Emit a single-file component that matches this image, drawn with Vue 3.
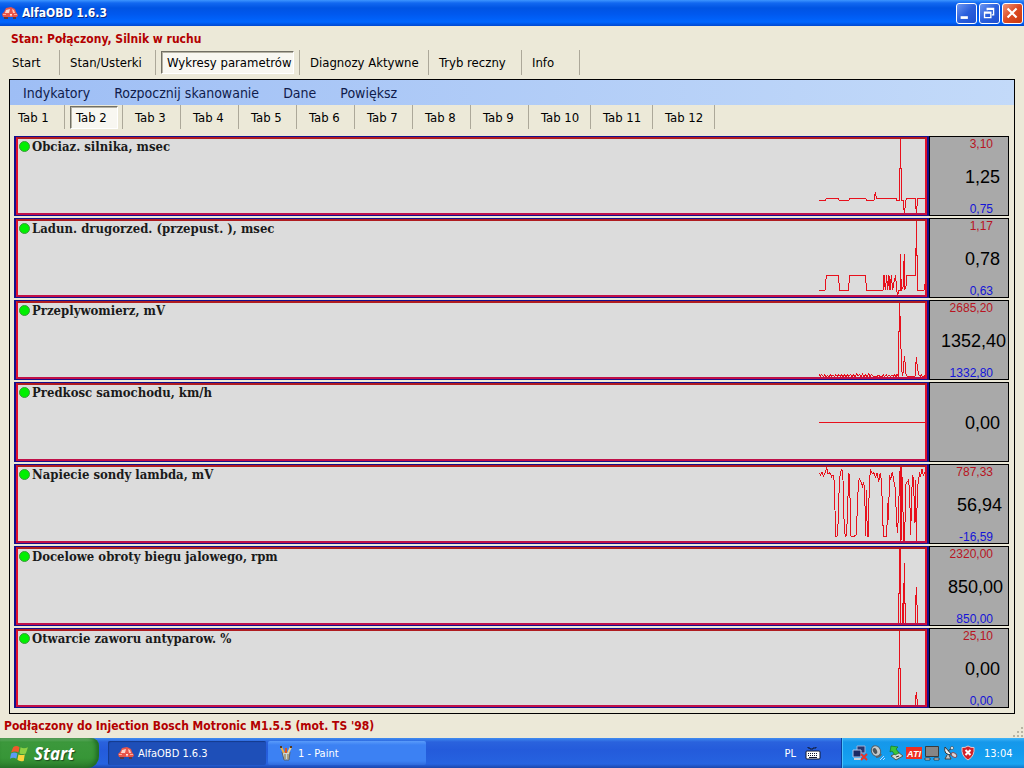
<script setup>
import { ref } from 'vue'

const sections = [
  { name: 'Start', size: 'w51' },
  { name: 'Stan/Usterki', size: 'w96' },
  { name: 'Wykresy parametrów', size: 'w134' },
  { name: 'Diagnozy Aktywne', size: 'w129' },
  { name: 'Tryb reczny', size: 'w92' },
  { name: 'Info', size: 'w58' },
]
const activeSection = ref('Wykresy parametrów')
const menu = ['Indykatory', 'Rozpocznij skanowanie', 'Dane', 'Powiększ']
const activeTab = ref(2)

const charts = [
  {
    name: 'Obciaz. silnika, msec', max: '3,10', value: '1,25', min: '0,75', top: 27,
    points: '57,211 76,211 79,205 115,205 118,211 147,211 150,205 197,205 200,211 222,211 226,187 229,205 290,205 291,211 298,211 298,115 301,115 301,25 302,115 304,115 304,210 310,212 310,222 313,250 316,225 319,205 346,205 349,250 353,205 378,205',
  },
  {
    name: 'Ladun. drugorzed. (przepust. ), msec', max: '1,17', value: '0,78', min: '0,63', top: 273,
    points: '57,481 75,481 79,436 115,436 119,481 145,481 149,436 196,436 200,481 249,481 252,436 256,481 260,436 263,481 267,436 270,481 274,436 278,481 283,450 287,436 290,481 293,496 297,481 301,481 301,373 304,481 310,470 311,402 314,373 314,481 318,470 319,436 346,436 346,355 349,355 349,270 351,375 353,375 354,481 372,481 376,455',
  },
  {
    name: 'Przeplywomierz, mV', max: '2685,20', value: '1352,40', min: '1332,80', top: 24,
    points: '57,237 61,244 65,238 70,245 74,240 78,245 82,242 88,245 92,239 95,245 99,240 104,244 108,239 112,245 116,238 121,244 125,240 129,245 133,239 138,245 143,240 147,244 151,238 156,245 161,239 165,245 170,236 174,243 178,238 183,245 188,237 192,245 197,240 201,245 206,236 210,245 215,238 220,244 232,244 235,241 240,244 246,244 250,240 254,245 259,239 263,245 267,239 271,245 276,240 280,245 284,238 288,245 291,237 295,244 296,110 298,110 299,20 301,100 302,100 304,220 308,244 312,200 314,183 317,235 321,244 330,243 340,244 345,243 349,186 353,225 357,241 361,243 364,240 367,244 373,244 377,240',
  },
  {
    name: 'Predkosc samochodu, km/h', max: '', value: '0,00', min: '', top: 270,
    points: '57,382 378,382',
  },
  {
    name: 'Napiecie sondy lambda, mV', max: '787,33', value: '56,94', min: '-16,59', top: 21,
    points: '57,38 62,45 66,35 70,50 75,40 80,22 84,42 90,38 95,50 99,45 102,60 105,150 107,228 111,228 115,180 118,60 122,35 126,28 129,60 133,215 138,230 142,180 146,40 149,50 152,228 160,230 168,225 172,150 175,70 178,55 183,65 187,80 191,65 194,90 197,228 199,90 202,228 205,228 208,60 212,32 217,42 222,38 226,52 231,40 236,65 241,38 245,70 248,180 251,228 260,228 263,130 266,180 268,45 272,60 277,35 281,60 285,80 289,160 292,220 296,160 298,60 301,20 303,243 305,20 308,110 311,243 314,243 317,75 322,65 326,60 329,100 332,225 335,100 338,45 341,60 344,190 346,60 349,243 352,100 355,60 359,40 362,48 366,28 370,45 375,35 377,50',
  },
  {
    name: 'Docelowe obroty biegu jalowego, rpm', max: '2320,00', value: '850,00', min: '850,00', top: 267,
    points: '57,492 296,492 296,400 299,400 299,262 301,262 302,492 306,492 307,430 310,430 310,492 313,308 314,430 316,430 317,492 346,492 347,435 349,380 351,435 353,492 378,492',
  },
  {
    name: 'Otwarcie zaworu antyparow. %', max: '25,10', value: '0,00', min: '0,00', top: 33,
    points: '57,258 295,258 295,144 298,144 298,28 299,144 302,144 302,258 346,258 347,236 349,215 351,236 353,258 378,258',
  },
]
</script>

<template>
  <div class="window">
    <header class="titlebar">
      <svg class="icon16" viewBox="0 0 16 16"><path d="M0 9 2 7 4 3 9 2 13 4 14 7 16 10 15 12 1 12Z" fill="#e9554a" /><path d="M4 5 8 4 7 8 3 8Z" fill="#fcd5cc" /><path d="m10 4 2 1 1 3-2 0Z" fill="#ffc8ba" /><path d="M1 9h3v1H1zM12 9h3v1h-3z" fill="#ffb09f" /><path d="M2 12h4v2H2zM11 12h3v2h-3z" fill="#5c3944" /><path d="m8 9 2 0-1 3Z" fill="#fff" /></svg>
      <h1>AlfaOBD 1.6.3</h1>
      <div class="winbtns">
        <button aria-label="Minimalizuj"><svg viewBox="0 0 21 21"><path d="M4 15h8" stroke="#fff" stroke-width="3" /></svg></button>
        <button aria-label="Przywróć"><svg viewBox="0 0 21 21"><path d="M8 7V5h7v7h-2M8 6h7" fill="none" stroke="#fff" stroke-width="1.5" /><path d="M5 9h7v6H5ZM5 10h7" fill="none" stroke="#fff" stroke-width="1.5" /></svg></button>
        <button class="close" aria-label="Zamknij"><svg viewBox="0 0 21 21"><path d="m5 5 10 10M15 5 5 15" stroke="#fff" stroke-width="2.4" /></svg></button>
      </div>
    </header>

    <p class="state">Stan: Połączony, Silnik w ruchu</p>

    <nav class="sections">
      <div v-for="s in sections" :key="s.name" class="cell" :class="[s.size, { on: s.name === activeSection }]">
        <button @click="activeSection = s.name">{{ s.name }}</button>
      </div>
    </nav>

    <main class="panel">
      <div class="menubar">
        <button v-for="m in menu" :key="m">{{ m }}</button>
      </div>
      <nav class="tabs">
        <div v-for="n in 12" :key="n" class="cell" :class="{ first: n === 1, wide: n > 9, on: n === activeTab }">
          <button @click="activeTab = n">Tab {{ n }}</button>
        </div>
      </nav>
      <section class="rows">
        <article v-for="c in charts" :key="c.name" class="row">
          <div class="chart">
            <h2><i class="dot"></i>{{ c.name }}</h2>
            <svg class="plot" :viewBox="`57 ${c.top} 321 222`"><polyline :points="c.points" /></svg>
          </div>
          <div class="reading">
            <span class="max">{{ c.max }}</span>
            <span class="value" :class="`len${c.value.length}`">{{ c.value }}</span>
            <span class="min">{{ c.min }}</span>
          </div>
        </article>
      </section>
    </main>

    <footer class="status">
      <span>Podłączony do Injection Bosch Motronic M1.5.5 (mot. TS '98)</span>
      <svg class="grip" viewBox="0 0 12 12"><path d="M9 1h2v2H9zM5 5h2v2H5zM9 5h2v2H9zM1 9h2v2H1zM5 9h2v2H5zM9 9h2v2H9z" fill="#b8b4a3" /></svg>
    </footer>

    <div class="taskbar">
      <button class="start">
        <svg viewBox="0 0 18 18"><path d="M3 3q3-2 6 0L8 8Q5 6 1 8Z" fill="#f0592b" /><path d="M10 3q3 2 7 0l-2 6q-3 1-6 0Z" fill="#8cd044" /><path d="M1 9q3-2 6 0l-1 5q-3-2-6 0Z" fill="#5b9bf5" /><path d="M8 10q3 1 6 0l-1 6q-4 1-6-1Z" fill="#fbd33c" /></svg>
        Start
      </button>
      <button class="task pressed">
        <svg class="icon16" viewBox="0 0 16 16"><path d="M0 9 2 7 4 3 9 2 13 4 14 7 16 10 15 12 1 12Z" fill="#e9554a" /><path d="M4 5 8 4 7 8 3 8Z" fill="#fcd5cc" /><path d="m10 4 2 1 1 3-2 0Z" fill="#ffc8ba" /><path d="M1 9h3v1H1zM12 9h3v1h-3z" fill="#ffb09f" /><path d="M2 12h4v2H2zM11 12h3v2h-3z" fill="#5c3944" /><path d="m8 9 2 0-1 3Z" fill="#fff" /></svg>
        AlfaOBD 1.6.3
      </button>
      <button class="task">
        <svg class="icon16" viewBox="0 0 16 16"><path d="M4 7h8l-1 8H6Z" fill="#c9d6dc" stroke="#56606c" /><path d="M6 8 3 2" stroke="#e7b14a" stroke-width="2" /><path d="m8 8 0-5" stroke="#d8532b" stroke-width="2" /><path d="m10 8 3-6" stroke="#f0d38a" stroke-width="2" /><path d="M2 1h2v2H2zM12 1h2v2h-2z" fill="#5a3b1d" /><path d="M7 9v5M10 9v5" stroke="#8a6f2b" /></svg>
        1 - Paint
      </button>
      <div class="lang">
        <span>PL</span>
        <svg viewBox="0 0 16 14"><path d="M3 1v1h2v1h3V2h3V1" fill="none" stroke="#101830" /><rect x="1" y="5" width="14" height="8" rx="1" fill="#fff" stroke="#101830" /><path d="M3 7.5h10M3 9.5h10" stroke="#101830" stroke-dasharray="1 1" /><path d="M4 11.5h8" stroke="#101830" /></svg>
      </div>
      <div class="tray">
        <svg viewBox="0 0 16 16"><path d="M5 1h8v7H5z" fill="#26356e" stroke="#9fb2d8" /><path d="M1 5h8v7H1z" fill="#1c2a63" stroke="#b4c4e6" /><path d="M2 14h7" stroke="#cdd3dc" stroke-width="2" /><path d="m9 9 6 6M15 9l-6 6" stroke="#e8332a" stroke-width="2" /></svg>
        <svg viewBox="0 0 16 16"><ellipse cx="6" cy="6" rx="4.500" ry="5.500" transform="rotate(-25 6 6)" fill="#c6cacb" stroke="#50606a" /><ellipse cx="5" cy="6" rx="2" ry="3" transform="rotate(-25 5 6)" fill="#4c555b" /><path d="M6 12q4 0 5-3" fill="none" stroke="#5b666c" stroke-width="2" /><path d="m10 15 4-4M13 15l2-2" stroke="#bcd8ff" /></svg>
        <svg viewBox="0 0 16 16"><path d="m3 11 7-4 5 4-7 4Z" fill="#d7dad5" stroke="#4d5750" /><path d="m3 1 7 1-2 2 3 4-4 2-3-4-2 1Z" fill="#39c43c" stroke="#16771e" stroke-width=".7" /><path d="m8 12 3-1" stroke="#333" /></svg>
        <svg viewBox="0 0 16 16"><path d="M0 2h16v12H0z" fill="#ee2f23" /><text x="8" y="12" text-anchor="middle" class="ati">ATI</text></svg>
        <svg viewBox="0 0 16 16"><path d="M1.500 1.500h13v10h-13z" fill="#868686" stroke="#3a3a3a" /><path d="M1 13h5v2H1zM10 13h5v2h-5z" fill="#d9dce0" stroke="#333" stroke-width=".8" /></svg>
        <svg viewBox="0 0 16 16"><path d="M3 2q-2 8 7 8Z" fill="#eef0f0" stroke="#333" /><path d="m6 6 4-3" stroke="#333" /><path d="m5 10-2 4h6L7 10" fill="#c7c7c7" stroke="#444" /><ellipse cx="12" cy="10" rx="3" ry="2" fill="#ded6d6" stroke="#81505a" transform="rotate(35 12 10)" /><circle cx="10" cy="3" r="1.500" fill="#fff" stroke="#333" stroke-width=".6" /></svg>
        <svg viewBox="0 0 16 16"><path d="M8 1q3 2 6 1.500Q15 11 8 15 1 11 2 2.500 5 3 8 1Z" fill="#d3202a" stroke="#e9c3c3" /><path d="m5.500 5 5 5M10.500 5l-5 5" stroke="#fff" stroke-width="2" /></svg>
        <time>13:04</time>
      </div>
    </div>
  </div>
</template>

<style>
html, body { height: 100%; }
#app { height: 100%; }
</style>

<style scoped>
* { box-sizing: border-box; }
.window {
  min-height: 100%;
  display: flex;
  flex-direction: column;
  background: #ece9d8;
  font-family: "DejaVu Sans Condensed", "DejaVu Sans", sans-serif;
  font-size: 13px;
  color: #000;
}
button {
  font: inherit;
  color: inherit;
  background: none;
  border: 0;
  padding: 0;
  margin: 0;
  white-space: nowrap;
}
svg { display: block; flex: none; }
.icon16 { width: 16px; height: 16px; }
.titlebar {
  height: 26px;
  display: flex;
  align-items: center;
  gap: 4px;
  padding: 0 1px 0 2px;
  background: linear-gradient(#3d95ff 0, #1268f0 3px, #0054e3 8px, #0058ee 14px, #0066ff 22px, #0048d0 26px);
}
h1 {
  margin: 0;
  flex: 1;
  font-size: 12px;
  font-weight: bold;
  color: #fff;
  text-shadow: 1px 1px 0 #0a2a80;
}
.winbtns { display: flex; gap: 2px; }
.winbtns button {
  width: 21px;
  height: 21px;
  border: 1px solid #fff;
  border-radius: 3px;
  background: linear-gradient(135deg, #6d97f2, #2a5fdc 50%, #1e4fd0);
}
.winbtns svg { width: 19px; height: 19px; }
.winbtns .close { background: linear-gradient(135deg, #f0957a, #dc4a22 50%, #c8390f); }
.state {
  margin: 0;
  padding: 4px 11px 0;
  height: 24px;
  font-size: 12px;
  line-height: 18px;
  font-weight: bold;
  color: #b30000;
}
.sections, .tabs { display: flex; }
.sections { padding-left: 9px; height: 29px; }
.cell {
  height: 25px;
  display: flex;
  align-items: center;
  border-right: 1px solid #aca899;
}
.cell button { flex: 1; height: 23px; text-align: left; }
.sections .cell { padding-left: 10px; }
.sections .cell.w51 { width: 51px; padding-left: 3px; }
.w96 { width: 96px; }
.w129 { width: 129px; }
.w92 { width: 93px; }
.w58 { width: 58px; }
.sections .cell.w134 { width: 144px; padding: 0 5px; }
.cell.on button {
  background: #f8f7f1;
  border-top: 1px solid #716f64;
  border-left: 1px solid #716f64;
  border-right: 1px solid #fff;
  border-bottom: 1px solid #fff;
  padding-left: 5px;
  box-shadow: inset 1px 1px 0 #b5b2a4;
}
.panel {
  flex: 1;
  margin: 0 9px;
  border: 1px solid #000;
}
.menubar {
  height: 25px;
  display: flex;
  align-items: center;
  gap: 24px;
  padding: 0 13px;
  background: linear-gradient(90deg, #9ebef5, #c3daf9);
  color: #101c4c;
  font-size: 14px;
}
.tabs { height: 30px; }
.tabs .cell { width: 58px; height: 24px; padding-left: 12px; }
.tabs .cell button { height: 22px; }
.tabs .cell.first { width: 55px; padding-left: 8px; }
.tabs .cell.wide { width: 62px; }
.tabs .cell.on { padding: 0 4px 0 5px; }
.tabs .cell.on button { height: 23px; }
.rows {
  display: flex;
  flex-direction: column;
  gap: 2px;
  padding: 1px 5px 5px 4px;
}
.row { height: 80px; display: flex; }
.chart {
  flex: 1;
  min-width: 0;
  display: flex;
  justify-content: space-between;
  margin: 1px 2px;
  background: #dcdcdc;
  border: 2px solid #e0102c;
  border-top-color: #b01c20;
  border-bottom-color: #c01048;
  box-shadow: -1px 0 0 1px #16108c, 1px 0 0 1px #16108c;
}
h2 {
  margin: 0;
  height: 14px;
  display: flex;
  align-items: center;
  gap: 2px;
  padding-left: 1px;
  font-family: "DejaVu Serif Condensed", "DejaVu Serif", serif;
  font-size: 13px;
  line-height: 13px;
  color: #1a1a1a;
}
.dot {
  width: 11px;
  height: 11px;
  border-radius: 50%;
  background: #00f000;
  border: 1px solid #3a9a3a;
}
.plot { width: 107px; height: 74px; margin-right: -1px; }
.plot polyline {
  fill: none;
  stroke: #e8101c;
  stroke-width: 3;
  shape-rendering: crispEdges;
}
.reading {
  width: 80px;
  border: 1px solid #000;
  background: #a9a9a9;
  display: flex;
  flex-direction: column;
  justify-content: space-between;
  text-align: right;
  font-family: "Liberation Sans", Arial, sans-serif;
  font-size: 12px;
}
.reading span { height: 14px; line-height: 14px; padding-right: 15px; }
.reading .value { height: 20px; line-height: 22px; font-size: 18px; padding-right: 8px; }
.reading .value.len5 { padding-right: 6px; }
.reading .value.len6 { padding-right: 5px; }
.reading .value.len7 { padding-right: 2px; }
.max { color: #b81422; }
.reading .min { line-height: 16px; color: #1414d8; }
.status {
  height: 24px;
  display: flex;
  align-items: center;
  justify-content: space-between;
  padding-left: 4px;
  font-size: 12px;
  font-weight: bold;
  color: #b30000;
}
.grip { width: 12px; height: 12px; align-self: flex-end; }
.taskbar {
  height: 30px;
  display: flex;
  align-items: stretch;
  background: linear-gradient(#3f8cf0 0, #2a62dd 4px, #245bdb 12px, #2663e0 26px, #1c46ab 30px);
  color: #fff;
  font-size: 11px;
}
.start {
  width: 99px;
  display: flex;
  align-items: center;
  gap: 5px;
  padding-left: 10px;
  margin-right: 9px;
  border-radius: 0 8px 12px 0;
  background: linear-gradient(#7ac07a 0, #3c983c 4px, #379637 20px, #2b7a2b 30px);
  box-shadow: inset -3px 0 4px #1f6a24;
  font-family: "Open Sans", sans-serif;
  font-weight: bold;
  font-style: italic;
  font-size: 17px;
  text-shadow: 1px 1px 1px #1d4a1d;
}
.start svg { width: 19px; height: 19px; }
.task {
  width: 158px;
  height: 24px;
  margin: 3px 2px 0 0;
  display: flex;
  align-items: center;
  gap: 4px;
  padding-left: 10px;
  border-radius: 2px;
  background: linear-gradient(#5a9bfa, #3c81f3 4px, #3c81f3 20px, #2f6bdc);
}
.task.pressed { background: #1e4fb8; box-shadow: inset 1px 1px 1px #153a8c; }
.lang {
  margin-left: auto;
  display: flex;
  align-items: center;
  gap: 9px;
  padding-right: 20px;
}
.lang svg { width: 16px; height: 14px; }
.tray {
  width: 183px;
  display: flex;
  align-items: center;
  gap: 2px;
  padding-left: 10px;
  background: linear-gradient(#3fb4f8 0, #1698ea 4px, #129bee 14px, #18a4f2 26px, #1277c8 30px);
  border-left: 1px solid #0d3f9c;
  box-shadow: inset 1px 0 0 #4cc3fb;
}
.tray svg { width: 16px; height: 16px; }
.ati { font: italic bold 9px "Liberation Sans", Arial, sans-serif; fill: #fff; }
.tray time { margin-left: 6px; }
</style>
